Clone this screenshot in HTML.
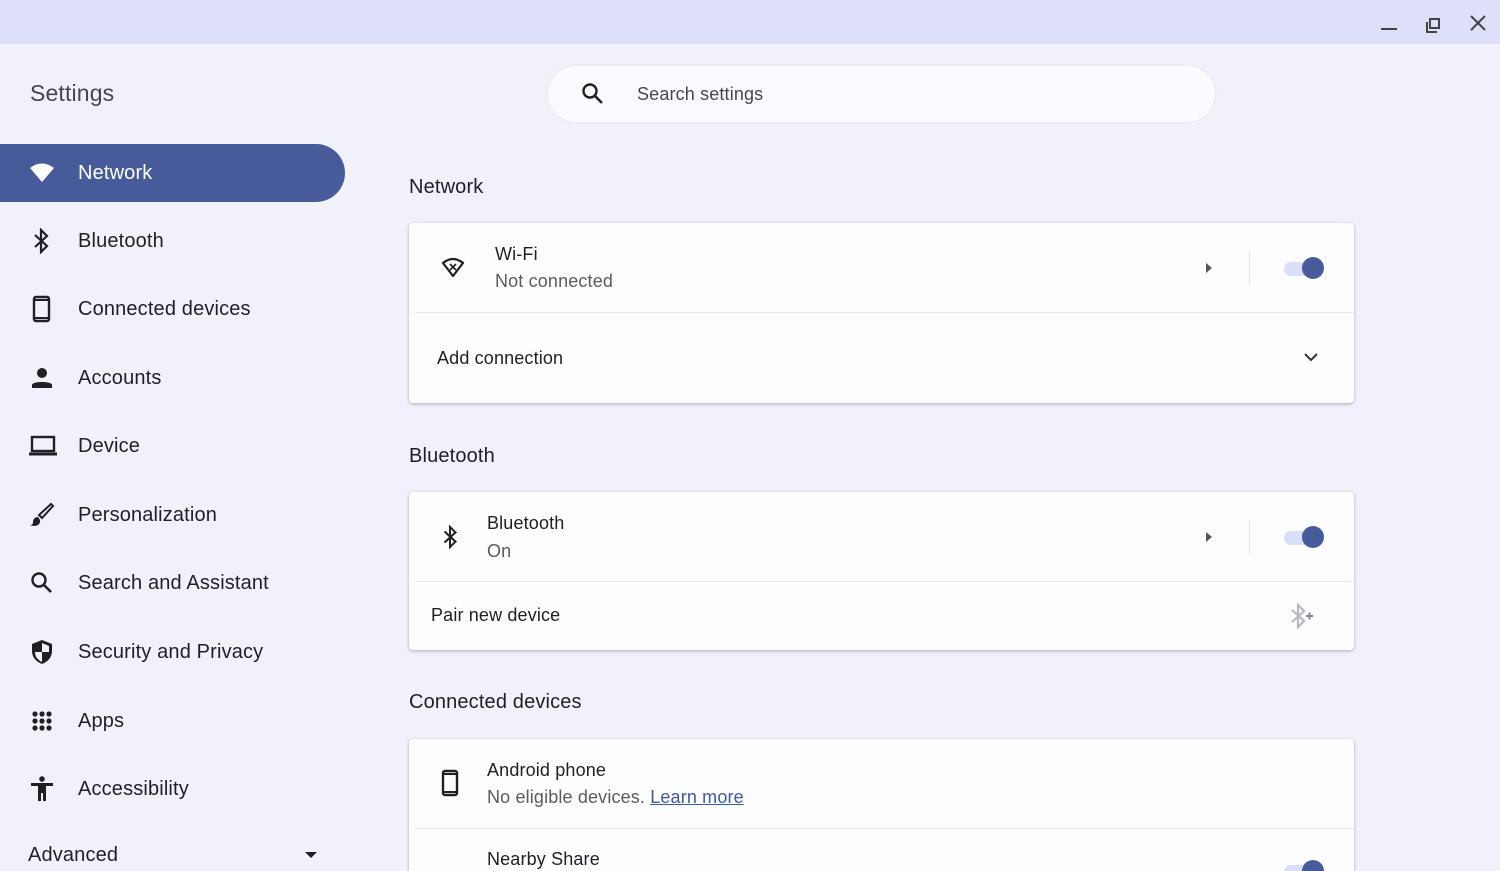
<!DOCTYPE html>
<html><head><style>
*{margin:0;padding:0;box-sizing:border-box}
html{width:1500px;height:871px;overflow:hidden}
body{width:1500px;height:871px;overflow:hidden;background:#f1f1fb;font-family:"Liberation Sans",sans-serif;color:#1f1f24;position:relative;letter-spacing:0.15px}
.top{position:absolute;left:0;top:0;width:1500px;height:44px;background:#dde0f8}
.abs{position:absolute}
.side{font-size:20px;}
.item{position:absolute;left:0;width:345px;height:58px;display:flex;align-items:center}
.item svg{position:absolute;left:29px}
.item span{position:absolute;left:78px}
.act{background:#475b9a;color:#fff;border-radius:0 29px 29px 0}
.card{position:absolute;left:409px;width:945px;background:#fdfcff;border-radius:4px;box-shadow:0 1px 3px rgba(0,0,0,.3)}
.h{position:absolute;left:409px;font-size:20px;color:#1f1f24}
.t{position:absolute;font-size:18px;color:#1f1f24}
.s{position:absolute;font-size:18px;color:#5a5a60}
.sep{position:absolute;left:6px;right:0;height:1px;background:#e6e6ec}
.tog{position:absolute;width:44px;height:24px}
.tog i{position:absolute;left:2px;top:6px;width:38px;height:14px;border-radius:7px;background:#d9defa}
.tog b{position:absolute;right:2px;top:1px;width:22px;height:22px;border-radius:11px;background:#475b9a}
.vl{position:absolute;width:1px;height:34px;background:#e4e4ea}
</style></head><body>
<div class="top"></div>
<svg class="abs" style="left:1380px;top:14px" width="110" height="20"><path d="M1 15h16" stroke="#444" stroke-width="2"/><path d="M47 8v10h10M50 5h9v9h-9z" stroke="#444" stroke-width="2" fill="none"/><path d="M91 2l14 14M105 2l-14 14" stroke="#444" stroke-width="2"/></svg>
<div class="abs" style="left:30px;top:80px;font-size:23px;color:#444650">Settings</div>
<div class="abs" style="left:548px;top:66px;width:667px;height:56px;border-radius:28px;background:#fbfbff;box-shadow:0 0 3px rgba(0,0,0,.06)"></div>
<svg class="abs" style="left:581px;top:82px" width="24" height="24"><circle cx="9" cy="9" r="6.5" stroke="#1f1f24" stroke-width="2.4" fill="none"/><path d="M14 14l7 7" stroke="#1f1f24" stroke-width="2.6"/></svg>
<div class="abs" style="left:637px;top:84px;font-size:18px;color:#45464f">Search settings</div>

<div class="side">
<div class="item act" style="top:144px"><svg width="26" height="22" viewBox="0 0 26 22"><path d="M1 6Q13-3 25 6L13 20z" fill="#fff"/></svg><span>Network</span></div>
<div class="item" style="top:212px"><svg width="24" height="26" viewBox="0 0 24 26"><path d="M6 7l12 11-6 6V2l6 6-12 11" stroke="#1f1f24" stroke-width="2.2" fill="none"/></svg><span>Bluetooth</span></div>
<div class="item" style="top:280px"><svg width="26" height="28" viewBox="0 0 26 28"><rect x="5" y="2" width="15" height="24" rx="2" stroke="#1f1f24" stroke-width="2.4" fill="none"/><path d="M5 5h15M5 23h15" stroke="#1f1f24" stroke-width="2"/></svg><span>Connected devices</span></div>
<div class="item" style="top:349px"><svg width="26" height="26" viewBox="0 0 26 26"><circle cx="13" cy="8" r="5" fill="#1f1f24"/><path d="M3 23v-3c0-4 20-4 20 0v3z" fill="#1f1f24"/></svg><span>Accounts</span></div>
<div class="item" style="top:417px"><svg width="28" height="24" viewBox="0 0 28 24"><rect x="3" y="3" width="22" height="14" stroke="#1f1f24" stroke-width="2.4" fill="none"/><path d="M0 20h28" stroke="#1f1f24" stroke-width="3"/></svg><span>Device</span></div>
<div class="item" style="top:486px"><svg width="26" height="26" viewBox="0 0 26 26"><path d="M22 2l2 2-11 12-3-3z" stroke="#1f1f24" stroke-width="2" fill="none"/><path d="M9 15c-3 0-5 2-5 5 0 2-1 3-3 3 4 2 11 1 10-5z" fill="#1f1f24"/></svg><span>Personalization</span></div>
<div class="item" style="top:554px"><svg width="26" height="26" viewBox="0 0 26 26"><circle cx="10" cy="10" r="6.5" stroke="#1f1f24" stroke-width="2.4" fill="none"/><path d="M15 15l7 7" stroke="#1f1f24" stroke-width="2.6"/></svg><span>Search and Assistant</span></div>
<div class="item" style="top:623px"><svg width="26" height="28" viewBox="0 0 26 28"><path d="M13 2l10 4v7c0 7-5 11-10 13C8 24 3 20 3 13V6z" fill="#1f1f24"/><path d="M13 5v9H6c0 5 3 8 7 10V14h7V8z" fill="#f1f1fb"/></svg><span>Security and Privacy</span></div>
<div class="item" style="top:692px"><svg width="26" height="26" viewBox="0 0 26 26" fill="#1f1f24"><circle cx="6" cy="6" r="2.6"/><circle cx="13" cy="6" r="2.6"/><circle cx="20" cy="6" r="2.6"/><circle cx="6" cy="13" r="2.6"/><circle cx="13" cy="13" r="2.6"/><circle cx="20" cy="13" r="2.6"/><circle cx="6" cy="20" r="2.6"/><circle cx="13" cy="20" r="2.6"/><circle cx="20" cy="20" r="2.6"/></svg><span>Apps</span></div>
<div class="item" style="top:760px"><svg width="26" height="28" viewBox="0 0 26 28" fill="#1f1f24"><circle cx="13" cy="4" r="2.8"/><path d="M2 8h22v3h-7v15h-3v-8h-2v8H9V11H2z"/></svg><span>Accessibility</span></div>
<div class="abs" style="left:28px;top:844px">Advanced</div>
<svg class="abs" style="left:304px;top:851px" width="14" height="8"><path d="M1 1h12L7 7z" fill="#1f1f24"/></svg>
</div>

<div class="h" style="top:176px">Network</div>
<div class="card" style="top:223px;height:180px">
  <svg class="abs" style="left:32px;top:34px" width="24" height="22" viewBox="0 0 24 22"><path d="M2 6Q12-2 22 6L12 19z" stroke="#1f1f24" stroke-width="2.2" fill="none" stroke-linejoin="round"/><path d="M9 7l6 6M15 7l-6 6" stroke="#1f1f24" stroke-width="1.6"/></svg>
  <div class="t" style="left:86px;top:21px">Wi-Fi</div>
  <div class="s" style="left:86px;top:48px">Not connected</div>
  <svg class="abs" style="left:796px;top:39px" width="8" height="12"><path d="M1 1l6 5-6 5z" fill="#555"/></svg>
  <div class="vl" style="left:840px;top:28px"></div>
  <div class="tog" style="left:873px;top:33px"><i></i><b></b></div>
  <div class="sep" style="top:89px"></div>
  <div class="t" style="left:28px;top:125px">Add connection</div>
  <svg class="abs" style="left:895px;top:129px" width="14" height="10"><path d="M1 2l6 6 6-6" stroke="#333" stroke-width="2" fill="none"/></svg>
</div>

<div class="h" style="top:445px">Bluetooth</div>
<div class="card" style="top:492px;height:158px">
  <svg class="abs" style="left:30px;top:32px" width="22" height="26" viewBox="0 0 24 26"><path d="M6 7l12 11-6 6V2l6 6-12 11" stroke="#1f1f24" stroke-width="2.2" fill="none"/></svg>
  <div class="t" style="left:78px;top:21px">Bluetooth</div>
  <div class="s" style="left:78px;top:49px">On</div>
  <svg class="abs" style="left:796px;top:39px" width="8" height="12"><path d="M1 1l6 5-6 5z" fill="#555"/></svg>
  <div class="vl" style="left:840px;top:28px"></div>
  <div class="tog" style="left:873px;top:33px"><i></i><b></b></div>
  <div class="sep" style="top:89px"></div>
  <div class="t" style="left:22px;top:113px">Pair new device</div>
  <svg class="abs" style="left:877px;top:111px" width="28" height="26" viewBox="0 0 28 26"><path d="M6 7l12 11-6 6V2l6 6-12 11" stroke="#b8b8c0" stroke-width="2.2" fill="none"/><path d="M20 13h7M23.5 9.5v7" stroke="#888" stroke-width="2"/></svg>
</div>

<div class="h" style="top:691px">Connected devices</div>
<div class="card" style="top:739px;height:160px">
  <svg class="abs" style="left:31px;top:30px" width="20" height="28" viewBox="0 0 20 28"><rect x="3" y="2" width="14" height="24" rx="2" stroke="#1f1f24" stroke-width="2.4" fill="none"/><path d="M3 5h14M3 23h14" stroke="#1f1f24" stroke-width="2"/></svg>
  <div class="t" style="left:78px;top:21px">Android phone</div>
  <div class="s" style="left:78px;top:48px">No eligible devices. <span style="color:#3d5a9e;text-decoration:underline">Learn more</span></div>
  <div class="sep" style="top:89px"></div>
  <div class="t" style="left:78px;top:110px">Nearby Share</div>
  <div class="tog" style="left:873px;top:120px"><i></i><b></b></div>
</div>
</body></html>
